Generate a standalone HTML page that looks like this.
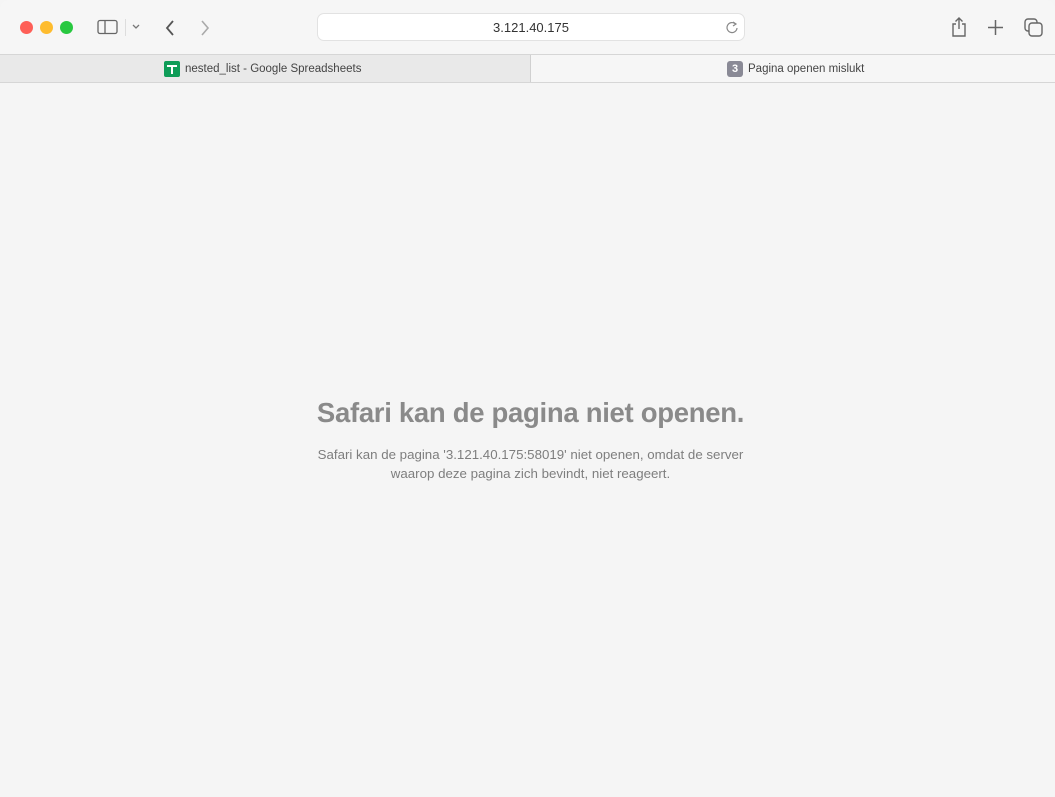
<!DOCTYPE html>
<html><head><style>
*{margin:0;padding:0;box-sizing:border-box}
body{width:1055px;height:797px;background:#f5f5f5;font-family:"Liberation Sans",sans-serif;position:relative;overflow:hidden}
.top{position:absolute;left:0;top:0;width:1055px;height:54px;background:#f6f6f6;border-radius:10px 10px 0 0}
.tabs{position:absolute;left:0;top:54px;width:1055px;height:29px;background:#f6f6f6;border-top:1px solid #d6d6d6;border-bottom:1px solid #d6d6d6}
.tab1{position:absolute;left:0;top:0;width:531px;height:27px;background:#e9e9e9;border-right:1px solid #d0d0d0}
.dot{position:absolute;top:21px;width:13px;height:13px;border-radius:50%}
.url{position:absolute;left:317px;top:13px;width:428px;height:28px;background:#fff;border:1px solid #e2e2e2;border-radius:7px;text-align:center;font-size:13px;line-height:28px;color:#333}
.t{position:absolute;font-size:11.5px;line-height:14px;color:#444;top:7px}
h1{position:absolute;top:397px;left:0;width:1061px;text-align:center;font-size:27.5px;color:#8a8a8a;font-weight:bold;letter-spacing:-0.3px}
p{position:absolute;top:445px;left:0;width:1061px;text-align:center;font-size:13.3px;line-height:19px;color:#7e7e7e}
</style></head><body>
<div class="top">
<div class="dot" style="left:20px;background:#fe5f57"></div>
<div class="dot" style="left:40px;background:#febc2e"></div>
<div class="dot" style="left:60px;background:#28c840"></div>
<svg style="position:absolute;left:97px;top:19px" width="22" height="17"><rect x="1" y="1.5" width="19" height="13" rx="2" fill="none" stroke="#666" stroke-width="1.3"/><line x1="8" y1="2" x2="8" y2="14" stroke="#666" stroke-width="1.3"/></svg>
<div style="position:absolute;left:125px;top:19px;width:1px;height:17px;background:#ddd"></div>
<svg style="position:absolute;left:131px;top:23px" width="10" height="8"><path d="M2 2 L5 5 L8 2" fill="none" stroke="#777" stroke-width="1.3"/></svg>
<svg style="position:absolute;left:162px;top:18px" width="16" height="20"><path d="M11 3 L5 10 L11 17" fill="none" stroke="#555" stroke-width="1.8"/></svg>
<svg style="position:absolute;left:197px;top:18px" width="16" height="20"><path d="M5 3 L11 10 L5 17" fill="none" stroke="#aaa" stroke-width="1.6"/></svg>
<div class="url">3.121.40.175</div>
<svg style="position:absolute;left:725px;top:20px" width="14" height="14"><path d="M10.5 4 A5 5 0 1 0 12 8" fill="none" stroke="#888" stroke-width="1.2"/><path d="M8 2 L11 4 L8 6" fill="none" stroke="#888" stroke-width="1.2"/></svg>
<svg style="position:absolute;left:950px;top:16px" width="18" height="22"><path d="M6 8 H3 V20 H15 V8 H12 M9 2 V13 M5.5 5.5 L9 2 L12.5 5.5" fill="none" stroke="#666" stroke-width="1.4"/></svg>
<svg style="position:absolute;left:987px;top:19px" width="17" height="17"><path d="M8.5 1 V16 M1 8.5 H16" stroke="#666" stroke-width="1.5"/></svg>
<svg style="position:absolute;left:1024px;top:18px" width="20" height="20"><rect x="1" y="1" width="12" height="12" rx="3" fill="none" stroke="#666" stroke-width="1.4"/><rect x="5" y="5" width="13" height="13" rx="3" fill="#f6f6f6" stroke="#666" stroke-width="1.4"/></svg>
</div>
<div class="tabs">
<div class="tab1">
<div style="position:absolute;left:164px;top:6px;width:16px;height:16px;background:#0f9d58;border-radius:2px"><div style="position:absolute;left:3px;top:4px;width:10px;height:2px;background:#fff"></div><div style="position:absolute;left:7px;top:4px;width:2px;height:9px;background:#fff"></div></div>
<div class="t" style="left:185px">nested_list - Google Spreadsheets</div>
</div>
<div style="position:absolute;left:727px;top:6px;width:16px;height:16px;background:#8a8a96;border-radius:3px;color:#fff;font-size:11px;font-weight:bold;text-align:center;line-height:16px">3</div>
<div class="t" style="left:748px">Pagina openen mislukt</div>
</div>
<h1>Safari kan de pagina niet openen.</h1>
<p>Safari kan de pagina '3.121.40.175:58019' niet openen, omdat de server<br>waarop deze pagina zich bevindt, niet reageert.</p>
</body></html>
